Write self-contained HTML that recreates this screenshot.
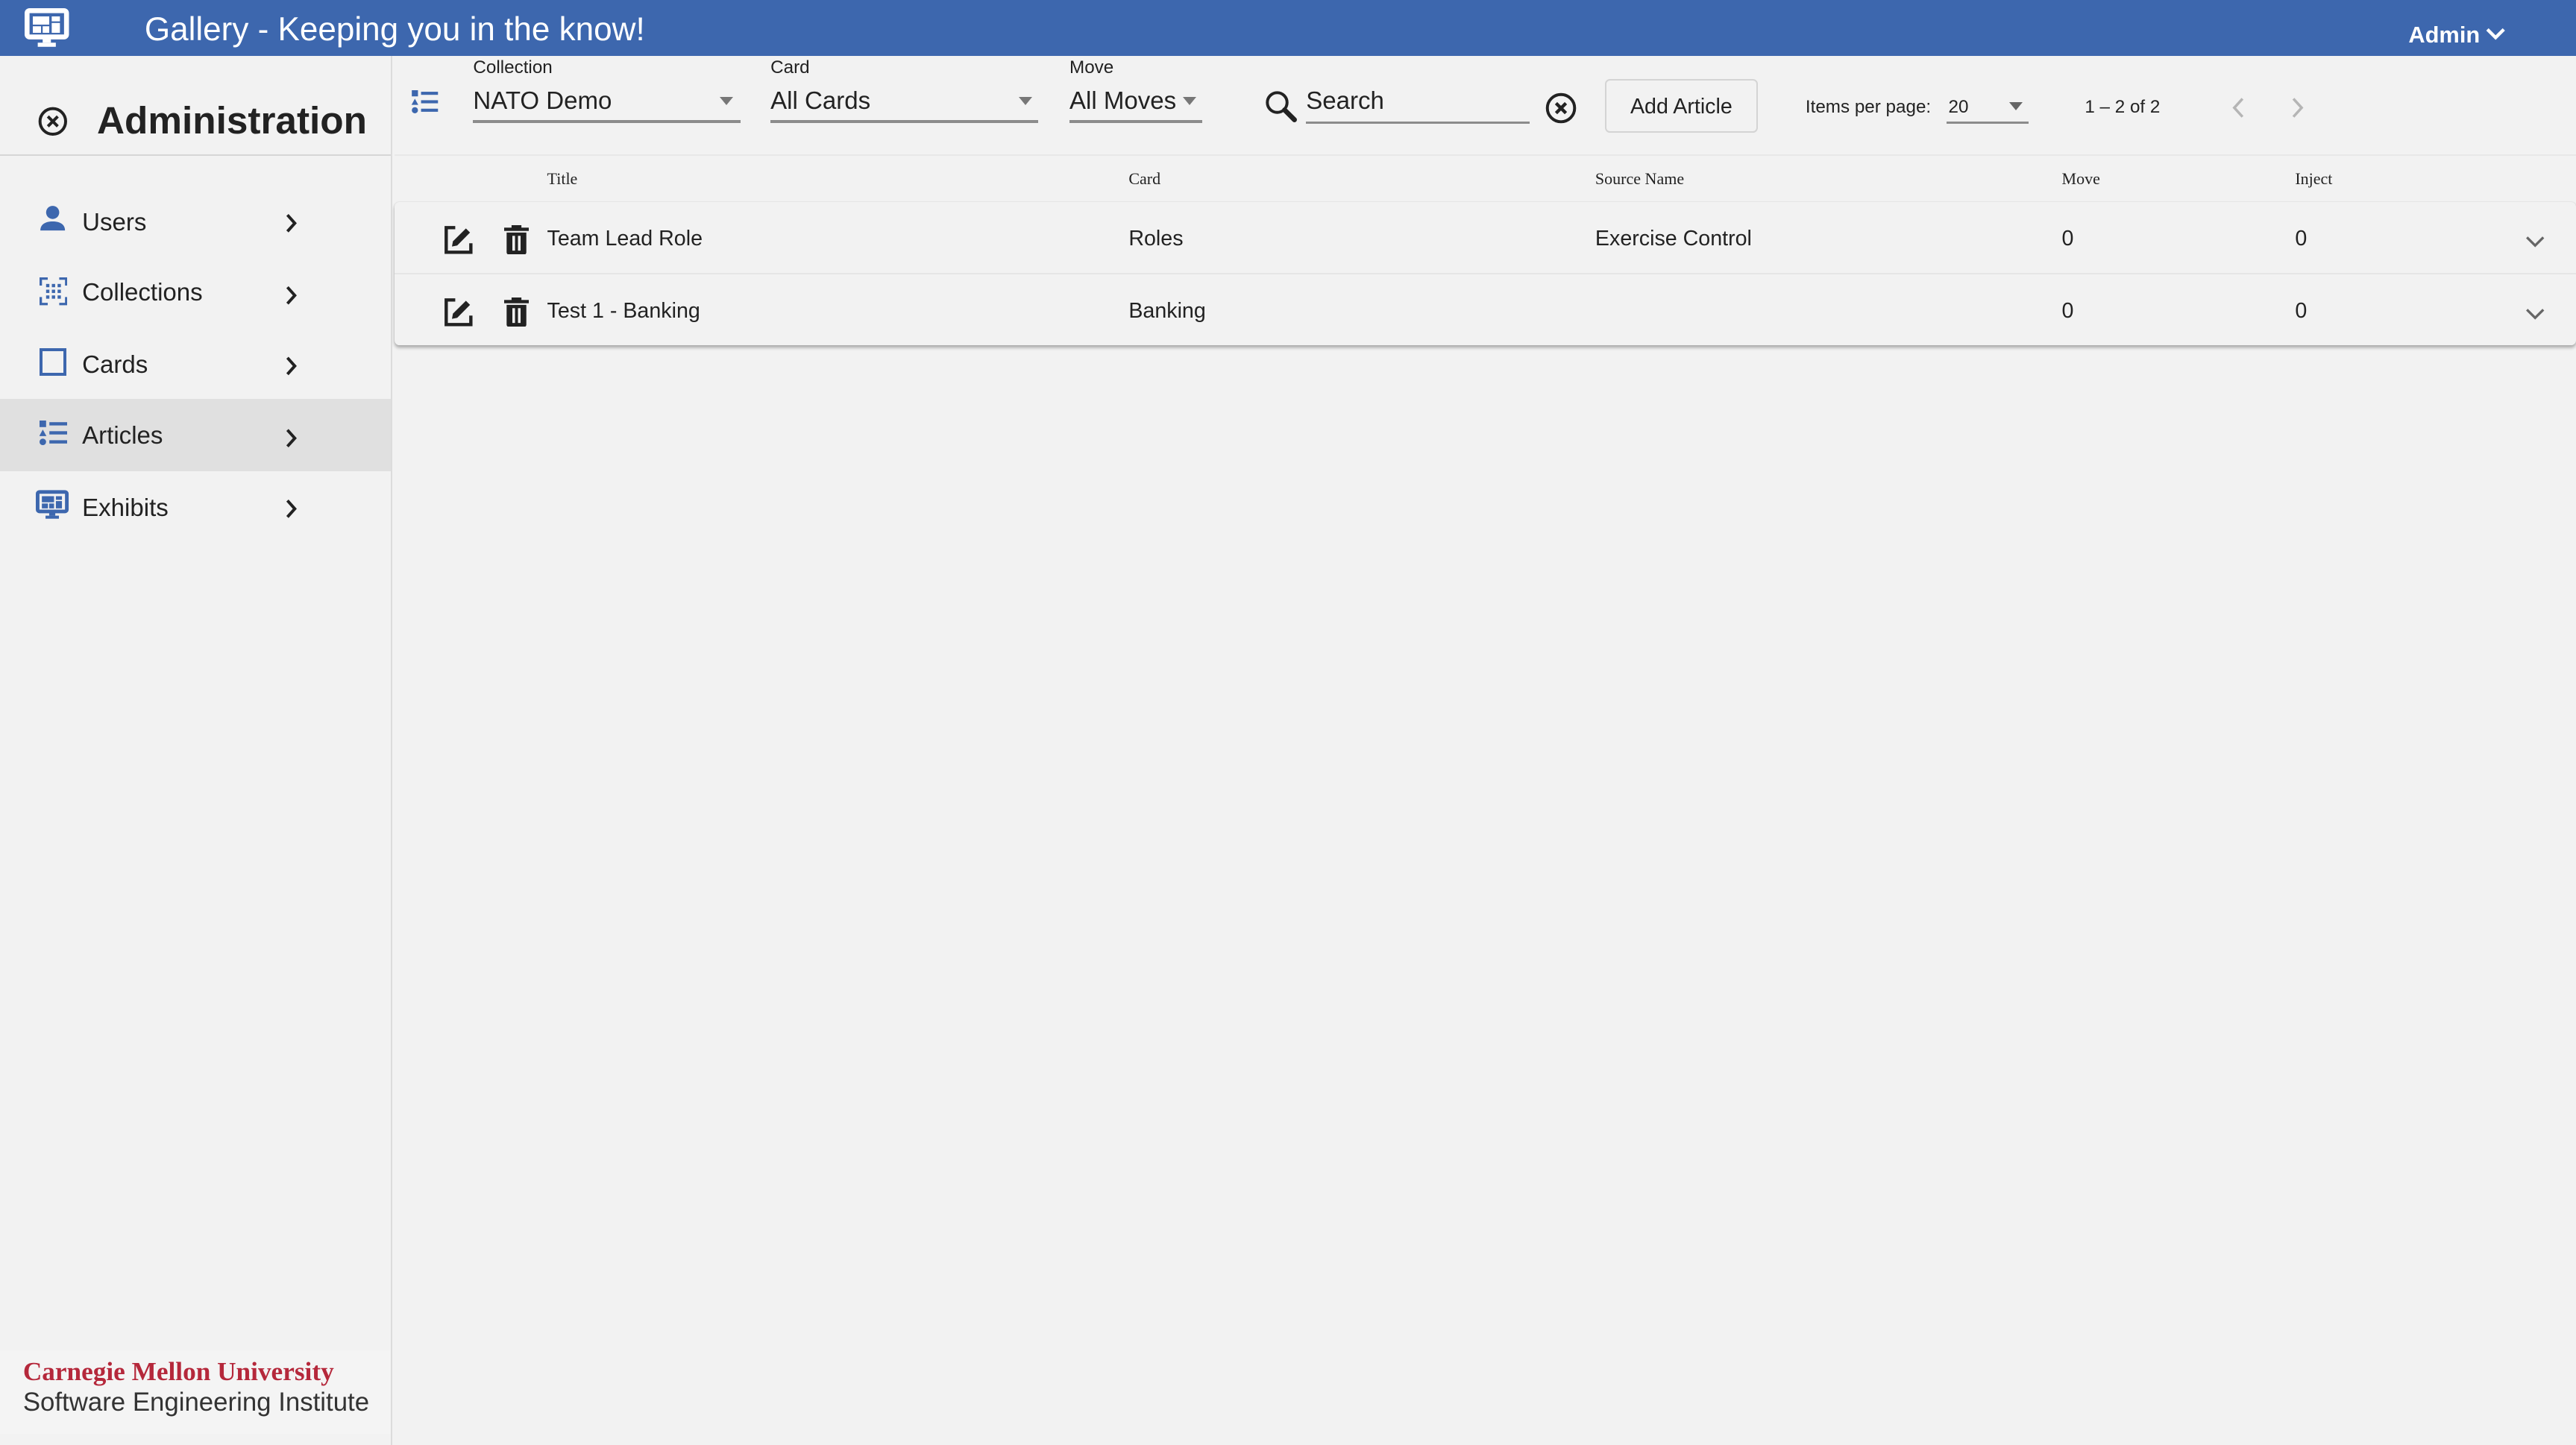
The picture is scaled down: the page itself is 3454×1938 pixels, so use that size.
<!DOCTYPE html>
<html><head><meta charset="utf-8"><style>
html,body{margin:0;padding:0;background:#f2f2f2;overflow:hidden;width:3454px;height:1938px}
#r{position:relative;width:1568px;height:880px;zoom:2.20281;font-family:"Liberation Sans",sans-serif;color:#222;background:#f2f2f2;overflow:hidden}
.a{position:absolute;white-space:nowrap}
.hdr{left:0;top:0;width:1568px;height:34px;background:#3d67ae}
.side{left:0;top:34px;width:238px;height:846px;border-right:1px solid #dcdcdc;background:#f2f2f2}
.nav{font-size:15px;color:#222}
.lbl{font-size:11px;color:#222}
.val{font-size:15px;color:#222}
.ul{height:2px;background:#8c8c8c}
.th{font-family:"Liberation Serif",serif;font-size:10px;color:#222}
.td{font-size:13px;color:#222}
.tri{width:0;height:0;border-left:4.5px solid transparent;border-right:4.5px solid transparent;border-top:5px solid #777}
</style></head><body><div id="r">
<div class="a hdr"></div>
<svg class="a" style="left:15px;top:5px" width="27" height="24" viewBox="0 0 27 24"><rect x="1.5" y="1.5" width="24" height="16" rx="1.5" fill="none" stroke="#fff" stroke-width="3"/><rect x="5" y="5" width="10" height="5" fill="#fff"/><rect x="16.5" y="5" width="5" height="3" fill="#fff"/><rect x="16.5" y="9" width="5" height="6" fill="#fff"/><rect x="5" y="11" width="5" height="4" fill="#fff"/><rect x="11" y="11" width="4" height="4" fill="#fff"/><rect x="11" y="18" width="5" height="3" fill="#fff"/><rect x="8" y="21" width="11" height="2.5" fill="#fff"/></svg>
<div class="a" style="left:88px;top:7px;font-size:20px;color:#fff">Gallery - Keeping you in the know!</div>
<div class="a" style="left:1466px;top:13px;font-size:14px;color:#fff;font-weight:bold">Admin</div>
<svg class="a" style="left:1513px;top:16px" width="12" height="9" viewBox="0 0 12 9"><path d="M1 2l5 5 5-5" fill="none" stroke="#fff" stroke-width="2"/></svg>

<div class="a side"></div>
<svg class="a" style="left:23px;top:65px" width="18" height="18" viewBox="0 0 18 18"><circle cx="9" cy="9" r="7.8" fill="none" stroke="#222" stroke-width="1.8"/><path d="M6 6l6 6M12 6l-6 6" stroke="#222" stroke-width="1.8"/></svg>
<div class="a" style="left:59px;top:60px;font-size:23.3px;font-weight:bold;color:#222">Administration</div>
<div class="a" style="left:0;top:94px;width:238px;height:1px;background:#d6d6d6"></div>
<div class="a" style="left:0;top:243px;width:238px;height:44px;background:#e0e0e0"></div>

<svg class="a" style="left:24px;top:125px" width="16" height="16" viewBox="0 0 16 16"><circle cx="8" cy="4.5" r="4" fill="#3d67ae"/><path d="M0.5 15.5c0-4 3.5-5.5 7.5-5.5s7.5 1.5 7.5 5.5z" fill="#3d67ae"/></svg>
<div class="a nav" style="left:50px;top:127px">Users</div>
<svg class="a" style="left:24px;top:169px" width="17" height="17" viewBox="0 0 17 17" fill="#3d67ae"><path d="M0 0h5v1.5H1.5V5H0zM12 0h5v5h-1.5V1.5H12zM0 12h1.5v3.5H5V17H0zM15.5 12H17v5h-5v-1.5h3.5z"/><rect x="4" y="4" width="2" height="2"/><rect x="7.5" y="4" width="2" height="2"/><rect x="11" y="4" width="2" height="2"/><rect x="4" y="7.5" width="2" height="2"/><rect x="7.5" y="7.5" width="2" height="2"/><rect x="11" y="7.5" width="2" height="2"/><rect x="4" y="11" width="2" height="2"/><rect x="7.5" y="11" width="2" height="2"/><rect x="11" y="11" width="2" height="2"/></svg>
<div class="a nav" style="left:50px;top:170px">Collections</div>
<div class="a" style="left:24px;top:212px;width:13px;height:13px;border:2px solid #3d67ae"></div>
<div class="a nav" style="left:50px;top:214px">Cards</div>
<svg class="a" style="left:24px;top:256px" width="17" height="16" viewBox="0 0 17 16" fill="#3d67ae"><rect x="0" y="0" width="4" height="4"/><path d="M2 5.5L4.2 9.5H-0.2z"/><circle cx="2" cy="13" r="2"/><rect x="6" y="1" width="11" height="2"/><rect x="6" y="6.5" width="11" height="2"/><rect x="6" y="12" width="11" height="2"/></svg>
<div class="a nav" style="left:50px;top:257px">Articles</div>
<svg class="a" style="left:22px;top:298px" width="20" height="19" viewBox="0 0 27 24"><rect x="1.5" y="1.5" width="24" height="16" rx="1.5" fill="none" stroke="#3d67ae" stroke-width="3"/><rect x="5" y="5" width="10" height="5" fill="#3d67ae"/><rect x="16.5" y="5" width="5" height="3" fill="#3d67ae"/><rect x="16.5" y="9" width="5" height="6" fill="#3d67ae"/><rect x="5" y="11" width="5" height="4" fill="#3d67ae"/><rect x="11" y="11" width="4" height="4" fill="#3d67ae"/><rect x="11" y="18" width="5" height="3" fill="#3d67ae"/><rect x="8" y="21" width="11" height="2.5" fill="#3d67ae"/></svg>
<div class="a nav" style="left:50px;top:301px">Exhibits</div>
<svg class="a" style="left:173px;top:130px" width="8" height="200" viewBox="0 0 8 200"><g fill="none" stroke="#222" stroke-width="1.8"><path d="M2 1l4.5 5L2 11"/><path d="M2 45l4.5 5L2 55"/><path d="M2 88l4.5 5L2 98"/><path d="M2 132l4.5 5L2 142"/><path d="M2 175l4.5 5L2 185"/></g></svg>

<div class="a" style="left:0;top:822px;width:238px;height:51px;background:#f4f4f4"></div>
<div class="a" style="left:14px;top:826px;font-family:'Liberation Serif',serif;font-weight:bold;font-size:16px;color:#b5283b;letter-spacing:0px">Carnegie Mellon University</div>
<div class="a" style="left:14px;top:845px;font-size:15.8px;color:#333">Software Engineering Institute</div>

<svg class="a" style="left:250px;top:55px" width="17" height="15" viewBox="0 0 17 16" fill="#3d67ae"><rect x="0" y="0" width="4" height="4"/><path d="M2 5.5L4.2 9.5H-0.2z"/><circle cx="2" cy="13" r="2"/><rect x="6" y="1" width="11" height="2"/><rect x="6" y="6.5" width="11" height="2"/><rect x="6" y="12" width="11" height="2"/></svg>
<div class="a lbl" style="left:288px;top:35px">Collection</div>
<div class="a val" style="left:288px;top:53px">NATO Demo</div>
<div class="a tri" style="left:438px;top:59px"></div>
<div class="a ul" style="left:288px;top:73px;width:163px"></div>
<div class="a lbl" style="left:469px;top:35px">Card</div>
<div class="a val" style="left:469px;top:53px">All Cards</div>
<div class="a tri" style="left:620px;top:59px"></div>
<div class="a ul" style="left:469px;top:73px;width:163px"></div>
<div class="a lbl" style="left:651px;top:35px">Move</div>
<div class="a val" style="left:651px;top:53px">All Moves</div>
<div class="a tri" style="left:720px;top:59px"></div>
<div class="a ul" style="left:651px;top:73px;width:81px"></div>
<svg class="a" style="left:770px;top:55px" width="20" height="20" viewBox="0 0 20 20"><circle cx="7.5" cy="7.5" r="6" fill="none" stroke="#222" stroke-width="1.8"/><path d="M12 12l6 6" stroke="#222" stroke-width="3" stroke-linecap="round"/></svg>
<div class="a val" style="left:795px;top:53px">Search</div>
<div class="a ul" style="left:795px;top:74px;width:136px;height:1.5px"></div>
<svg class="a" style="left:940px;top:56px" width="20" height="20" viewBox="0 0 20 20"><circle cx="10" cy="10" r="8.3" fill="none" stroke="#222" stroke-width="1.8"/><path d="M7 7l6 6M13 7l-6 6" stroke="#222" stroke-width="2"/></svg>
<div class="a" style="left:977px;top:48px;width:91px;height:31px;border:1px solid #d4d4d4;border-radius:3px;font-size:13px;line-height:32px;text-align:center;color:#222">Add Article</div>
<div class="a" style="left:1099px;top:59px;font-size:11px">Items per page:</div>
<div class="a" style="left:1186px;top:59px;font-size:11px">20</div>
<div class="a tri" style="left:1223px;top:62px;border-top-color:#666"></div>
<div class="a ul" style="left:1185px;top:74px;width:50px;height:1.5px"></div>
<div class="a" style="left:1269px;top:59px;font-size:11px">1 – 2 of 2</div>
<svg class="a" style="left:1356px;top:58px" width="50" height="15" viewBox="0 0 50 15"><g fill="none" stroke="#b5b5b5" stroke-width="1.6"><path d="M9 2L4 7.5 9 13"/><path d="M40 2l5 5.5-5 5.5"/></g></svg>

<div class="a" style="left:240px;top:94px;width:1328px;height:1px;background:#e8e8e8"></div>
<div class="a th" style="left:333px;top:103px">Title</div>
<div class="a th" style="left:687px;top:103px">Card</div>
<div class="a th" style="left:971px;top:103px">Source Name</div>
<div class="a th" style="left:1255px;top:103px">Move</div>
<div class="a th" style="left:1397px;top:103px">Inject</div>

<div class="a" style="left:240px;top:123px;width:1328px;height:87px;background:#f2f2f2;border-radius:3px;box-shadow:0 1.5px 2px rgba(0,0,0,0.28),0 0 1px rgba(0,0,0,0.12)"></div>
<div class="a" style="left:240px;top:166px;width:1328px;height:1px;background:#e6e6e6"></div>

<svg class="a" style="left:270px;top:137px" width="18" height="18" viewBox="0 0 18 18"><path d="M7 1.5H1.5v15h15V11" fill="none" stroke="#222" stroke-width="2"/><path d="M5 13l0.6-3.2L13.5 2l2.5 2.5-7.8 7.9z" fill="#222"/></svg>
<svg class="a" style="left:307px;top:137px" width="15" height="18" viewBox="0 0 15 18"><rect x="0" y="1.5" width="15" height="2" fill="#222"/><rect x="4.5" y="0" width="6" height="2" fill="#222"/><path d="M1.5 4.5h12v12c0 .8-.6 1.5-1.5 1.5H3c-.8 0-1.5-.7-1.5-1.5z" fill="#222"/><rect x="5" y="6.5" width="1.6" height="9" fill="#f2f2f2"/><rect x="8.4" y="6.5" width="1.6" height="9" fill="#f2f2f2"/></svg>
<div class="a td" style="left:333px;top:138px">Team Lead Role</div>
<div class="a td" style="left:687px;top:138px">Roles</div>
<div class="a td" style="left:971px;top:138px">Exercise Control</div>
<div class="a td" style="left:1255px;top:138px">0</div>
<div class="a td" style="left:1397px;top:138px">0</div>
<svg class="a" style="left:1537px;top:143px" width="12" height="8" viewBox="0 0 12 8"><path d="M1 1.5l5 5 5-5" fill="none" stroke="#666" stroke-width="1.5"/></svg>

<svg class="a" style="left:270px;top:181px" width="18" height="18" viewBox="0 0 18 18"><path d="M7 1.5H1.5v15h15V11" fill="none" stroke="#222" stroke-width="2"/><path d="M5 13l0.6-3.2L13.5 2l2.5 2.5-7.8 7.9z" fill="#222"/></svg>
<svg class="a" style="left:307px;top:181px" width="15" height="18" viewBox="0 0 15 18"><rect x="0" y="1.5" width="15" height="2" fill="#222"/><rect x="4.5" y="0" width="6" height="2" fill="#222"/><path d="M1.5 4.5h12v12c0 .8-.6 1.5-1.5 1.5H3c-.8 0-1.5-.7-1.5-1.5z" fill="#222"/><rect x="5" y="6.5" width="1.6" height="9" fill="#f2f2f2"/><rect x="8.4" y="6.5" width="1.6" height="9" fill="#f2f2f2"/></svg>
<div class="a td" style="left:333px;top:182px">Test 1 - Banking</div>
<div class="a td" style="left:687px;top:182px">Banking</div>
<div class="a td" style="left:1255px;top:182px">0</div>
<div class="a td" style="left:1397px;top:182px">0</div>
<svg class="a" style="left:1537px;top:187px" width="12" height="8" viewBox="0 0 12 8"><path d="M1 1.5l5 5 5-5" fill="none" stroke="#666" stroke-width="1.5"/></svg>
</div></body></html>
